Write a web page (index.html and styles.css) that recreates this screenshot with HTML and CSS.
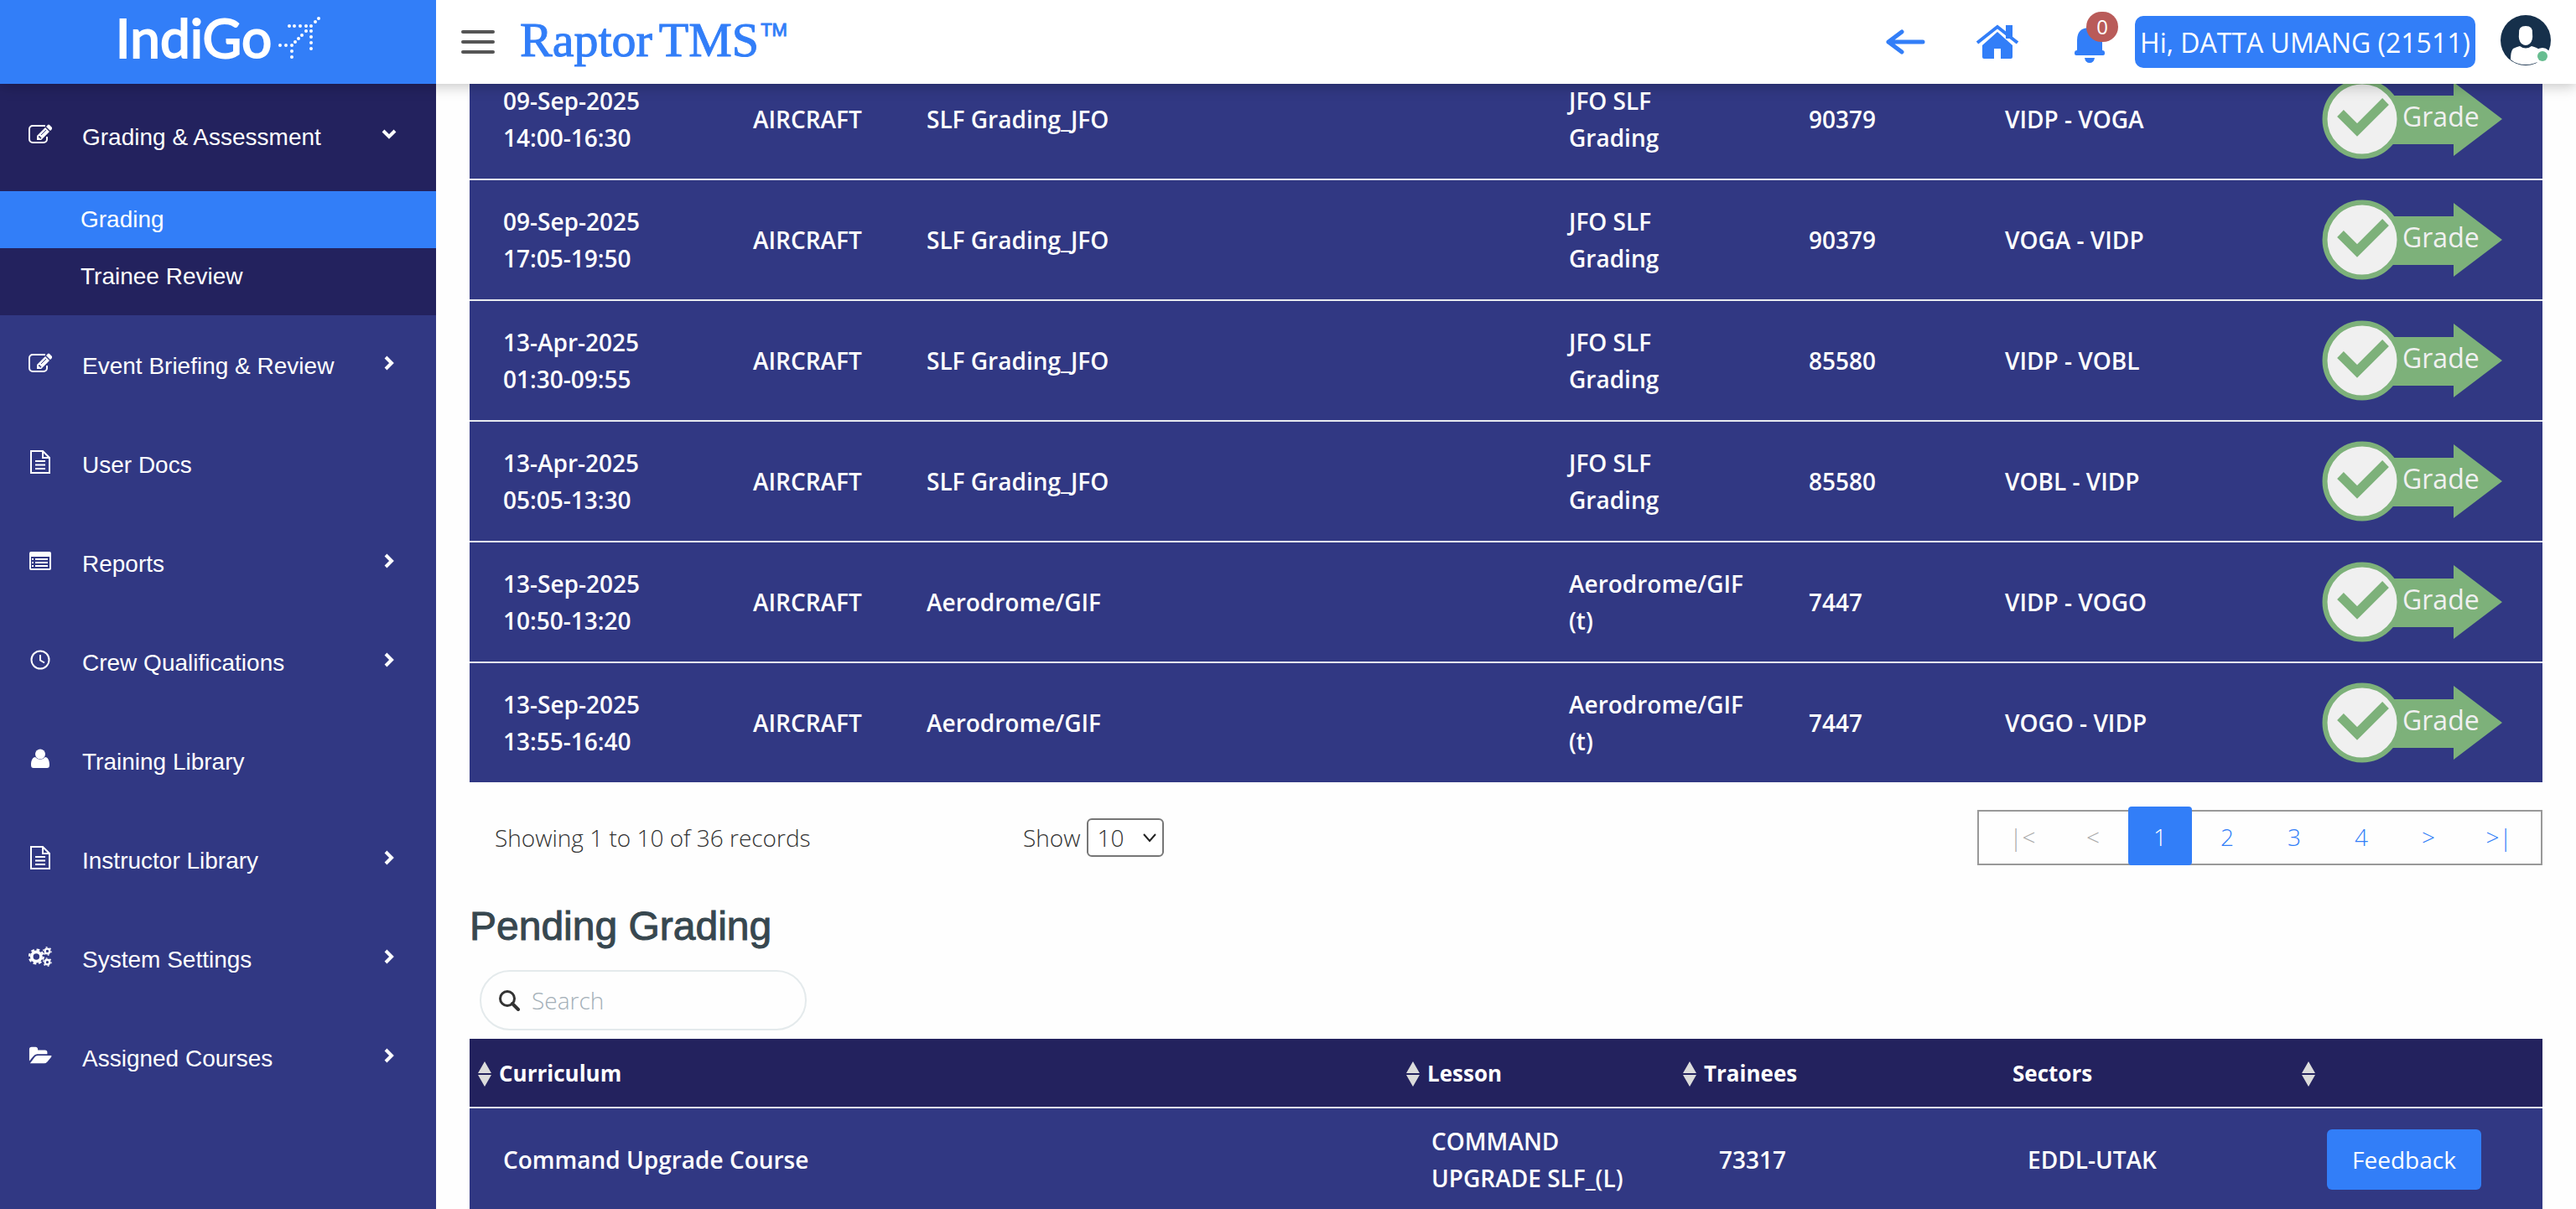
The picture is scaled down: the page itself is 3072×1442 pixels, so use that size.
FILE: index.html
```html
<!DOCTYPE html>
<html lang="en">
<head>
<meta charset="utf-8">
<title>Raptor TMS</title>
<link rel="stylesheet" href="styles.css">
</head>
<body>
<svg class="defs" aria-hidden="true">
  <symbol id="edit" viewBox="0 0 28 24"><path d="M20 2H5a4 4 0 0 0-4 4v12a4 4 0 0 0 4 4h13a4 4 0 0 0 4-4v-3" fill="none" stroke="currentColor" stroke-width="2"/><path fill-rule="evenodd" d="M10 19v-5L20 4l5 5-10 10zM12 15v1h1.500v1.500h1l1-1-2.500-2.500zM21 3l2-2q1-1 2 0l3 3q1 1 0 2l-2 2z" fill="currentColor"/><path d="M15 13l6-6" stroke="#313883" stroke-width="1"/></symbol>
  <symbol id="doc" viewBox="0 0 28 28"><path d="M3 1h14l8 8v18H3z M17 1v8h8 M8 13h12M8 17.500h12M8 22h12" fill="none" stroke="currentColor" stroke-width="2"/></symbol>
  <symbol id="list" viewBox="0 0 28 24"><path fill-rule="evenodd" d="M3 1h22a2 2 0 0 1 2 2v18a2 2 0 0 1-2 2H3a2 2 0 0 1-2-2V3a2 2 0 0 1 2-2zM3 7v14h22V7zM4 9h2v2H4zM8 9h15v2H8zM4 13h2v2H4zM8 13h15v2H8zM4 17h2v2H4zM8 17h15v2H8z" fill="currentColor"/></symbol>
  <symbol id="clock" viewBox="0 0 28 28"><circle cx="14" cy="14" r="10.500" fill="none" stroke="currentColor" stroke-width="2"/><path d="M14 8v6.500l5 3" fill="none" stroke="currentColor" stroke-width="2"/></symbol>
  <symbol id="user" viewBox="0 0 28 24"><circle cx="14" cy="6.500" r="6" fill="currentColor"/><path d="M3 19c0-5 2-9 5-9q3 3 6 3t6-3c3 0 5 4 5 9 0 3-1 4-3 4H6c-2 0-3-1-3-4z" fill="currentColor"/></symbol>
  <symbol id="gears" viewBox="0 0 30 26"><g fill="none" stroke="currentColor"><circle cx="10" cy="13" r="6" stroke-width="4"/><circle cx="10" cy="13" r="9" stroke-width="2.500" stroke-dasharray="4 3.070"/><circle cx="24" cy="6" r="3" stroke-width="2.500"/><circle cx="24" cy="6" r="5" stroke-width="1.500" stroke-dasharray="2 3.240"/><circle cx="24" cy="20" r="3" stroke-width="2.500"/><circle cx="24" cy="20" r="5" stroke-width="1.500" stroke-dasharray="2 3.240"/></g></symbol>
  <symbol id="folder" viewBox="0 0 30 24"><path d="M1 19V4q0-3 3-3h5q3 0 3 4h9q3 0 3 3v2H11q-3 0-5 3zM2 22l6-8q1-2 4-2h17q1 0 0 2l-5 6q-2 2-4 2z" fill="currentColor"/></symbol>
  <symbol id="chev" viewBox="0 0 12 18"><path d="M2 2l7 7-7 7" fill="none" stroke="currentColor" stroke-width="4"/></symbol>
  <symbol id="sort" viewBox="0 0 16 30"><path d="M8 0l8 14H0zM0 16h16L8 30z" fill="#dcdcdc"/></symbol>
  <symbol id="grade" viewBox="0 0 216 96"><path d="M80 20h78V4l58 44-58 44V78H80z" fill="#7db17a"/><circle cx="49" cy="48" r="44.500" fill="#f0f0f0" stroke="#7db17a" stroke-width="6"/><path d="M23 41l20 20 34-34" fill="none" stroke="#7db17a" stroke-width="11"/></symbol>
</svg>

<header class="topbar">
  <a class="brand" href="#" aria-label="IndiGo">
    <span>IndiGo</span>
    <svg class="brand-plane" viewBox="0 0 50 50"><path d="M48 2h0M44 6h0M39 11h0M33 11h0M26 11h0M19 11h0M13 11h0M39 17h0M39 24h0M39 31h0M39 38h0M33 17h0M28 22h0M24 26h0M20 30h0M16 34h0M9 34h0M2 34h0M16 41h0M16 48h0" fill="none" stroke="#fff" stroke-width="4" stroke-linecap="round"/></svg>
  </a>
  <div class="bar">
    <button class="burger" aria-label="Toggle menu"><i></i><i></i><i></i></button>
    <a class="product" href="#"><span>Raptor</span> <span>TMS</span><sup>TM</sup></a>
    <nav class="tools">
      <a href="#" class="back" aria-label="Back"><svg viewBox="0 0 48 30"><path d="M20 3L4 15l16 12M4 15h41" fill="none" stroke="currentColor" stroke-width="5" stroke-linecap="round" stroke-linejoin="round"/></svg></a>
      <a href="#" class="home" aria-label="Home"><svg viewBox="0 0 52 42"><path d="M26 9L8 25v14q0 2 2 2h12V29h8v12h12q2 0 2-2V25z" fill="currentColor"/><path d="M36 1h8v16h-8z" fill="currentColor"/><path d="M2 22L26 3l24 19" fill="none" stroke="currentColor" stroke-width="4"/></svg></a>
      <a href="#" class="bell" aria-label="Notifications"><svg viewBox="0 0 36 44"><path d="M3 28V16Q3 1 18 1t15 15v12q3 0 3 3v1q0 2-2 2H2q-2 0-2-2v-1q0-3 3-3zM12 37h12q-1 6-6 6t-6-6z" fill="currentColor"/></svg><span class="count">0</span></a>
      <button class="hello">Hi, DATTA UMANG (21511)</button>
      <a href="#" class="avatar" aria-label="Profile"><svg viewBox="0 0 60 60"><circle cx="30" cy="30" r="30" fill="#16304b"/><path d="M22 22q-1-9 8-9t8 9q1 8-3 12-5 4-10 0-4-4-3-12zM12 53q0-10 3-13 4-2 8-3 7 5 14 0 7 2 9 4 4 6 3 12-8 6-19 6t-18-6z" fill="#fff"/><circle cx="50" cy="49" r="10" fill="#fff"/><circle cx="50" cy="49" r="6" fill="#67bd90"/></svg></a>
    </nav>
  </div>
</header>

<div class="layout">
  <nav class="side">
    <div class="group open">
      <a class="item" href="#"><svg class="ico"><use href="#edit"/></svg><span>Grading &amp; Assessment</span><svg class="chev down"><use href="#chev"/></svg></a>
      <a class="sub active" href="#">Grading</a>
      <a class="sub" href="#">Trainee Review</a>
    </div>
    <a class="item" href="#"><svg class="ico"><use href="#edit"/></svg><span>Event Briefing &amp; Review</span><svg class="chev"><use href="#chev"/></svg></a>
    <a class="item" href="#"><svg class="ico"><use href="#doc"/></svg><span>User Docs</span></a>
    <a class="item" href="#"><svg class="ico"><use href="#list"/></svg><span>Reports</span><svg class="chev"><use href="#chev"/></svg></a>
    <a class="item" href="#"><svg class="ico"><use href="#clock"/></svg><span>Crew Qualifications</span><svg class="chev"><use href="#chev"/></svg></a>
    <a class="item" href="#"><svg class="ico"><use href="#user"/></svg><span>Training Library</span></a>
    <a class="item" href="#"><svg class="ico"><use href="#doc"/></svg><span>Instructor Library</span><svg class="chev"><use href="#chev"/></svg></a>
    <a class="item" href="#"><svg class="ico"><use href="#gears"/></svg><span>System Settings</span><svg class="chev"><use href="#chev"/></svg></a>
    <a class="item" href="#"><svg class="ico"><use href="#folder"/></svg><span>Assigned Courses</span><svg class="chev"><use href="#chev"/></svg></a>
  </nav>

  <main class="main">
    <table class="grid events">
      <colgroup><col class="e1"><col class="e2"><col class="e3"><col class="e4"><col class="e5"><col class="e6"><col class="e7"></colgroup>
      <tbody>
        <tr><td>09-Sep-2025<br>14:00-16:30</td><td>AIRCRAFT</td><td>SLF Grading_JFO</td><td>JFO SLF<br>Grading</td><td>90379</td><td>VIDP - VOGA</td><td><button class="grade"><svg><use href="#grade"/></svg><span>Grade</span></button></td></tr>
        <tr><td>09-Sep-2025<br>17:05-19:50</td><td>AIRCRAFT</td><td>SLF Grading_JFO</td><td>JFO SLF<br>Grading</td><td>90379</td><td>VOGA - VIDP</td><td><button class="grade"><svg><use href="#grade"/></svg><span>Grade</span></button></td></tr>
        <tr><td>13-Apr-2025<br>01:30-09:55</td><td>AIRCRAFT</td><td>SLF Grading_JFO</td><td>JFO SLF<br>Grading</td><td>85580</td><td>VIDP - VOBL</td><td><button class="grade"><svg><use href="#grade"/></svg><span>Grade</span></button></td></tr>
        <tr><td>13-Apr-2025<br>05:05-13:30</td><td>AIRCRAFT</td><td>SLF Grading_JFO</td><td>JFO SLF<br>Grading</td><td>85580</td><td>VOBL - VIDP</td><td><button class="grade"><svg><use href="#grade"/></svg><span>Grade</span></button></td></tr>
        <tr><td>13-Sep-2025<br>10:50-13:20</td><td>AIRCRAFT</td><td>Aerodrome/GIF</td><td>Aerodrome/GIF<br>(t)</td><td>7447</td><td>VIDP - VOGO</td><td><button class="grade"><svg><use href="#grade"/></svg><span>Grade</span></button></td></tr>
        <tr><td>13-Sep-2025<br>13:55-16:40</td><td>AIRCRAFT</td><td>Aerodrome/GIF</td><td>Aerodrome/GIF<br>(t)</td><td>7447</td><td>VOGO - VIDP</td><td><button class="grade"><svg><use href="#grade"/></svg><span>Grade</span></button></td></tr>
      </tbody>
    </table>

    <div class="footer">
      <p class="records">Showing 1 to 10 of 36 records</p>
      <label class="show" for="size">Show</label>
      <span class="size"><select id="size"><option>10</option><option>25</option><option>50</option></select><svg viewBox="0 0 18 12"><path d="M2 2l7 8 7-8" fill="none" stroke="#222" stroke-width="2"/></svg></span>
      <nav class="pages" aria-label="Pages">
        <a href="#" class="off end">|&lt;</a><a href="#" class="off">&lt;</a><a href="#" class="on">1</a><a href="#">2</a><a href="#">3</a><a href="#">4</a><a href="#">&gt;</a><a href="#" class="end">&gt;|</a>
      </nav>
    </div>

    <h2>Pending Grading</h2>
    <div class="search">
      <svg viewBox="0 0 26 26"><circle cx="11" cy="11" r="8.500" fill="none" stroke="#333" stroke-width="3"/><path d="M17 17l7 7" stroke="#333" stroke-width="4" stroke-linecap="round"/></svg>
      <input type="text" placeholder="Search" aria-label="Search pending grading">
    </div>

    <table class="grid pending">
      <colgroup><col class="p1"><col class="p2"><col class="p3"><col class="p4"><col class="p5"></colgroup>
      <thead>
        <tr><th><svg><use href="#sort"/></svg>Curriculum</th><th><svg><use href="#sort"/></svg>Lesson</th><th><svg><use href="#sort"/></svg>Trainees</th><th class="plain">Sectors</th><th><svg><use href="#sort"/></svg></th></tr>
      </thead>
      <tbody>
        <tr><td>Command Upgrade Course</td><td>COMMAND<br>UPGRADE SLF_(L)</td><td class="trainee">73317</td><td>EDDL-UTAK</td><td><button class="feedback">Feedback</button></td></tr>
      </tbody>
    </table>
  </main>
</div>
</body>
</html>
```
FILE: styles.css
```css
* { box-sizing: border-box; }
html, body { height: 100%; }
body {
  margin: 0;
  display: flex;
  flex-direction: column;
  overflow: hidden;
  background: #fefefe;
  color: #333;
  font: 300 28px/44px "Open Sans", "Noto Sans", sans-serif;
}
a { color: inherit; text-decoration: none; }
button { font: inherit; border: 0; padding: 0; cursor: pointer; }
.defs { display: none; }

/* top bar */
.topbar { display: flex; flex: none; height: 100px; position: relative; z-index: 2; box-shadow: 0 2px 16px rgba(0, 0, 0, .25); }
.brand {
  display: flex; align-items: center; justify-content: center; gap: 8px;
  width: 520px; padding-bottom: 10px; background: #327ef8; color: #fff;
  font: 400 64px/84px "Lato", sans-serif;
  -webkit-text-stroke: 2px #fff;
}
.brand-plane { width: 50px; height: 50px; }
.bar { flex: 1; display: flex; align-items: center; padding: 0 30px; background: #fff; }
.burger { display: grid; gap: 8px; width: 40px; background: none; }
.burger i { height: 4px; border-radius: 2px; background: #555; }
.product { display: flex; gap: 8px; margin-left: 30px; padding-bottom: 4px; color: #327ef8; font: 400 58px/92px "Liberation Serif", serif; -webkit-text-stroke: 1px #327ef8; }
.product sup { margin: 24px 0 0 -6px; font: 400 22px/20px "Liberation Sans", sans-serif; }
.tools { display: flex; align-items: center; margin-left: auto; color: #327ef8; }
.tools svg { display: block; }
.back svg { width: 48px; height: 30px; }
.home { margin-left: 60px; }
.home svg { width: 52px; height: 42px; }
.bell { position: relative; margin-left: 66px; padding-top: 8px; }
.bell svg { width: 36px; height: 44px; }
.count {
  position: absolute; left: 14px; top: -10px; width: 38px; height: 36px; border-radius: 18px;
  background: #b95b59; color: #fff; font: 400 24px/36px "Open Sans", sans-serif; text-align: center;
}
.hello { margin-left: 36px; width: 406px; height: 62px; padding-top: 2px; border-radius: 10px; background: #327ef8; color: #fff; font-size: 32px; font-weight: 400; white-space: nowrap; }
.avatar { margin-left: 30px; padding-bottom: 4px; }
.avatar svg { width: 60px; height: 60px; }

.layout { flex: 1; display: flex; min-height: 0; }

/* side menu */
.side { flex: none; width: 520px; background: #313883; color: #fff; font: 400 28px/36px "Liberation Sans", sans-serif; }
.item { display: flex; align-items: center; height: 118px; padding: 4px 50px 0 34px; }
.item span { flex: 1; margin-left: 36px; }
.ico { width: 28px; height: 28px; margin-bottom: 8px; }
.chev { width: 12px; height: 18px; margin-bottom: 8px; }
.down { transform: rotate(90deg); }
.open { background: #23225e; padding-bottom: 12px; }
.open .item { height: 128px; padding-top: 0; }
.sub { display: block; padding-left: 96px; line-height: 68px; }
.active { background: #327ef8; }

/* content */
.main { flex: 1; padding: 0 40px; overflow: hidden; }
.grid { width: 100%; table-layout: fixed; border-collapse: collapse; background: #313883; color: #fff; font-weight: 600; }
.grid td { padding: 0 0 0 40px; text-align: left; }
.events { margin-top: -30px; }
.events tr { height: 144px; border-bottom: 2px solid #e8ebf0; }
.events tr:last-child { height: 143px; border-bottom: 0; }
.e1 { width: 298px; } .e2 { width: 207px; } .e4 { width: 286px; } .e5 { width: 234px; } .e6 { width: 377px; } .e7 { width: 304px; }
.grade { position: relative; display: block; width: 216px; height: 96px; background: none; color: #f0f0f0; }
.grade svg { display: block; width: 216px; height: 96px; }
.grade span { position: absolute; left: 97px; top: 23px; font-size: 32px; font-weight: 500; }

.footer { display: flex; align-items: center; height: 132px; padding-left: 30px; }
.records { margin: 0; width: 630px; }
.size { position: relative; margin-left: 8px; }
.size select { appearance: none; display: block; width: 92px; height: 46px; padding: 0 10px; border: 2px solid #767676; border-radius: 6px; background: #fff; color: #333; font: inherit; line-height: 40px; }
.size svg { position: absolute; right: 8px; top: 17px; width: 18px; height: 12px; pointer-events: none; }
.pages { display: flex; gap: 4px; margin-left: auto; height: 66px; padding: 0 8px 0 10px; border: 2px solid #999; color: #327ef8; }
.pages a { width: 76px; text-align: center; line-height: 60px; }
.pages .end { width: 84px; }
.pages .off { color: #aaa; }
.pages .on { background: #327ef8; color: #fff; margin: -6px 0 -2px; padding-top: 6px; border-radius: 4px; }

h2 { margin: 8px 0 0; color: #37474f; font: 400 48px/64px "Liberation Sans", sans-serif; -webkit-text-stroke: 1px #37474f; }
.search { display: flex; align-items: center; width: 390px; height: 72px; margin: 20px 0 10px 12px; padding: 0 20px; border: 2px solid #e4eaec; border-radius: 36px; }
.search svg { width: 26px; height: 26px; }
.search input { width: 280px; margin-left: 12px; border: 0; outline: 0; background: none; font: inherit; color: #333; }
.search input::placeholder { color: #a3afb7; }

.pending th { height: 82px; padding: 0; background: #23225e; text-align: left; font-size: 26px; font-weight: 700; }
.pending th svg { width: 16px; height: 30px; margin: 0 9px 4px 10px; vertical-align: middle; }
.pending th.plain { padding-left: 22px; }
.pending tbody tr { height: 122px; border-top: 2px solid #e8ebf0; }
.pending .trainee { padding-left: 53px; }
.p2 { width: 330px; } .p3 { width: 381px; } .p4 { width: 357px; } .p5 { width: 297px; }
.feedback { display: block; width: 184px; height: 72px; border-radius: 6px; background: #327ef8; color: #fff; font-weight: 400; }
```
